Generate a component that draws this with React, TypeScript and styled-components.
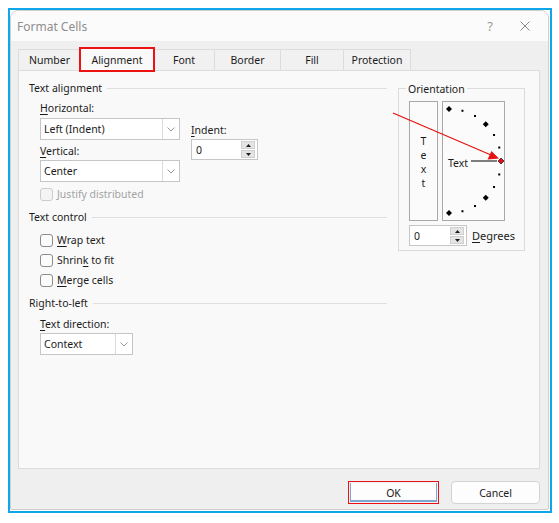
import React from "react";
import styled, { createGlobalStyle } from "styled-components";

const GlobalStyle = createGlobalStyle`
  html, body {
    margin: 0;
    padding: 0;
    background: #ffffff;
  }
  body {
    font-family: "Noto Sans", "Open Sans", "DejaVu Sans", sans-serif;
    font-size: 10.5px;
    color: #1b1b1b;
  }
`;

const Frame = styled("div")`
  margin: 8px 0 0 8px;
  width: 544px;
  height: 505px;
  box-sizing: border-box;
  border: 2px solid #10a7ea;
  background: #ffffff;
`;

const Dialog = styled("div")`
  width: 539px;
  height: 500px;
  box-sizing: border-box;
  border: 1px solid #cfcfcf;
  border-radius: 8px 8px 2px 2px;
  overflow: hidden;
  display: flex;
  flex-direction: column;
  background: #efefef;
`;

const TitleBar = styled("div")`
  height: 30px;
  flex: none;
  display: flex;
  align-items: center;
  padding-left: 6px;
  background: #fbfbfb;
`;

const Title = styled("div")`
  font-size: 12px;
  color: #8e8e8e;
  flex: 1;
`;

const TitleButton = styled("div")<{ $w: number }>`
  width: ${p => p.$w}px;
  height: 30px;
  display: flex;
  align-items: center;
  justify-content: center;
  color: #9a9a9a;
  font-size: 13px;
`;

const Body = styled("div")`
  flex: 1;
  padding: 8px 8px 0 7px;
  display: flex;
  flex-direction: column;
`;

const TabRow = styled("div")`
  display: flex;
  height: 21px;
  align-items: flex-end;
`;

const Tab = styled("div")<{ $w: number; $active?: boolean }>`
  width: ${p => p.$w}px;
  height: ${p => (p.$active ? 23 : 21)}px;
  box-sizing: border-box;
  display: flex;
  align-items: center;
  justify-content: center;
  background: ${p => (p.$active ? "#f9f9f9" : "#f1f1f1")};
  border: 1px solid #dcdcdc;
  border-bottom: none;
  margin-right: -1px;
  margin-bottom: ${p => (p.$active ? "-1px" : "0")};
  position: relative;
  z-index: ${p => (p.$active ? 2 : 1)};
  color: #1b1b1b;
  outline: ${p => (p.$active ? "2px solid #ee1111" : "none")};
  outline-offset: -1px;
`;

const Panel = styled("div")`
  position: relative;
  height: 399px;
  box-sizing: border-box;
  border: 1px solid #dcdcdc;
  background: #f9f9f9;
  padding: 10px 10px;
  display: flex;
  align-items: flex-start;
`;

const LeftColumn = styled("div")`
  width: 358px;
  display: flex;
  flex-direction: column;
`;

const GroupHeader = styled("div")<{ $top?: number }>`
  display: flex;
  align-items: center;
  height: 14px;
  margin-top: ${p => p.$top || 0}px;
  &::after {
    content: "";
    flex: 1;
    height: 1px;
    margin-left: 5px;
    background: #dfdfdf;
  }
`;

const Indented = styled("div")<{ $top?: number }>`
  padding-left: 11px;
  margin-top: ${p => p.$top || 0}px;
  display: flex;
  flex-direction: column;
`;

const AlignRow = styled("div")`
  display: flex;
  align-items: flex-start;
`;

const Stack = styled("div")<{ $top?: number; $left?: number }>`
  display: flex;
  flex-direction: column;
  padding-top: ${p => p.$top || 0}px;
  margin-left: ${p => p.$left || 0}px;
`;

const FieldLabel = styled("div")<{ $top?: number; $bottom?: number }>`
  height: 14px;
  line-height: 14px;
  margin-top: ${p => p.$top || 0}px;
  margin-bottom: ${p => p.$bottom || 0}px;
  u {
    text-decoration-thickness: 1px;
    text-underline-offset: 2px;
  }
`;

const SelectBox = styled("div")<{ $w: number }>`
  width: ${p => p.$w}px;
  height: 22px;
  box-sizing: border-box;
  border: 1px solid #c6c6c6;
  background: #ffffff;
  display: flex;
  align-items: center;
`;

const SelectValue = styled("div")`
  flex: 1;
  padding-left: 3px;
`;

const SelectArrow = styled("div")`
  width: 16px;
  height: 100%;
  border-left: 1px solid #dadada;
  display: flex;
  align-items: center;
  justify-content: center;
`;

const Spinner = styled("div")<{ $w: number }>`
  width: ${p => p.$w}px;
  height: 21px;
  box-sizing: border-box;
  border: 1px solid #c6c6c6;
  background: #ffffff;
  display: flex;
  align-items: center;
`;

const SpinValue = styled("div")`
  flex: 1;
  padding-left: 4px;
`;

const SpinButtons = styled("div")`
  width: 14px;
  height: 17px;
  margin-right: 2px;
  display: flex;
  flex-direction: column;
  gap: 1px;
`;

const SpinButton = styled("div")`
  flex: 1;
  background: #e4e4e4;
  border: 1px solid #cfcfcf;
  box-sizing: border-box;
  display: flex;
  align-items: center;
  justify-content: center;
`;

const CheckRow = styled("div")<{ $top?: number; $disabled?: boolean }>`
  display: flex;
  align-items: center;
  height: 14px;
  margin-top: ${p => p.$top || 0}px;
  color: ${p => (p.$disabled ? "#a3a3a3" : "#1b1b1b")};
  u {
    text-decoration-thickness: 1px;
    text-underline-offset: 2px;
  }
`;

const CheckBox = styled("div")<{ $disabled?: boolean }>`
  width: 13px;
  height: 13px;
  box-sizing: border-box;
  border: 1px solid ${p => (p.$disabled ? "#cdcdcd" : "#8c8c8c")};
  border-radius: 3px;
  background: ${p => (p.$disabled ? "#f4f4f4" : "#fbfbfb")};
  margin-right: 4px;
`;

const OrientBox = styled("div")`
  margin-left: 11px;
  margin-top: 7px;
  width: 127px;
  box-sizing: border-box;
  border: 1px solid #dcdcdc;
  padding: 0 9px 4px 10px;
  display: flex;
  flex-direction: column;
`;

const Legend = styled("div")`
  align-self: flex-start;
  margin: -7px 0 0 -3px;
  padding: 0 2px;
  height: 14px;
  line-height: 14px;
  background: #f9f9f9;
`;

const DialRow = styled("div")`
  display: flex;
  gap: 4px;
  margin-top: 5px;
`;

const VerticalText = styled("div")`
  width: 29px;
  height: 120px;
  box-sizing: border-box;
  border: 1px solid #a8a8a8;
  background: #fbfbfb;
  display: flex;
  flex-direction: column;
  align-items: center;
  justify-content: center;
  padding-top: 4px;
  line-height: 13.8px;
`;

const DialBox = styled("div")`
  width: 63px;
  height: 120px;
  box-sizing: border-box;
  border: 1px solid #a8a8a8;
  background: #fbfbfb;
  position: relative;
`;

const DialLabel = styled("div")`
  position: absolute;
  left: 5px;
  top: 54px;
  line-height: 14px;
`;

const DegreesRow = styled("div")`
  display: flex;
  align-items: center;
  margin-top: 4px;
  u {
    text-decoration-thickness: 1px;
    text-underline-offset: 2px;
  }
`;

const DegreesLabel = styled("div")`
  margin-left: 5px;
  font-size: 11px;
`;

const Annotation = styled("svg")`
  position: absolute;
  left: 0;
  top: 0;
  pointer-events: none;
`;

const ButtonRow = styled("div")`
  display: flex;
  justify-content: flex-end;
  gap: 12px;
  margin-top: 12px;
`;

const DialogButton = styled("div")<{ $w: number; $primary?: boolean }>`
  width: ${p => p.$w}px;
  height: 23px;
  box-sizing: border-box;
  border-radius: ${p => (p.$primary ? "0" : "4px")};
  border: 1px solid ${p => (p.$primary ? "#ee1111" : "#d3d3d3")};
  box-shadow: ${p => (p.$primary ? "inset 0 0 0 1px #eef3f8, inset 0 -1px 0 2px #7fa6cf" : "none")};
  background: #fdfdfd;
  display: flex;
  align-items: center;
  justify-content: center;
`;

const Chevron = () => (
  <svg width="8" height="5" viewBox="0 0 8 5">
    <polyline points="0.5,0.5 4,4 7.5,0.5" fill="none" stroke="#9a9a9a" strokeWidth="1" />
  </svg>
);

const Triangle = ({ up }: { up?: boolean }) => (
  <svg width="5" height="3" viewBox="0 0 5 3">
    <polygon points={up ? "0,3 2.5,0 5,3" : "0,0 5,0 2.5,3"} fill="#1b1b1b" />
  </svg>
);

const Select = ({ value, width }: { value: string; width: number }) => (
  <SelectBox $w={width}>
    <SelectValue>{value}</SelectValue>
    <SelectArrow>
      <Chevron />
    </SelectArrow>
  </SelectBox>
);

const Spin = ({ value, width }: { value: string; width: number }) => (
  <Spinner $w={width}>
    <SpinValue>{value}</SpinValue>
    <SpinButtons>
      <SpinButton>
        <Triangle up />
      </SpinButton>
      <SpinButton>
        <Triangle />
      </SpinButton>
    </SpinButtons>
  </Spinner>
);

const Check = ({ children, top, disabled }: { children: React.ReactNode; top?: number; disabled?: boolean }) => (
  <CheckRow $top={top} $disabled={disabled}>
    <CheckBox $disabled={disabled} />
    <span>{children}</span>
  </CheckRow>
);

// dial marks: centre at (7,60), radius 52, every 15 degrees
const DialMarks = () => {
  const marks = [];
  for (let a = -90; a <= 90; a += 15) {
    const r = (a * Math.PI) / 180;
    const x = 6 + 52 * Math.cos(r);
    const y = 59 - 52 * Math.sin(r);
    if (a % 45 === 0) {
      const color = a === 0 ? "#d11" : "#000";
      marks.push(
        <polygon
          key={a}
          points={`${x},${y - 3} ${x + 3},${y} ${x},${y + 3} ${x - 3},${y}`}
          fill={color}
          stroke={a === 0 ? "#000" : "none"}
          strokeWidth="0.6"
        />
      );
    } else {
      marks.push(<rect key={a} x={x - 1} y={y - 1} width="2" height="2" fill="#000" />);
    }
  }
  return (
    <svg width="61" height="118" viewBox="0 0 61 118" style={{ position: "absolute", left: 0, top: 0 }}>
      {marks}
      <line x1="28" y1="59" x2="54" y2="59" stroke="#000" strokeWidth="1" />
    </svg>
  );
};

const tabs = [
  { name: "Number", w: 63 },
  { name: "Alignment", w: 74 },
  { name: "Font", w: 62 },
  { name: "Border", w: 67 },
  { name: "Fill", w: 64 },
  { name: "Protection", w: 68 },
];

const App: React.FC = () => {
  return (
    <React.Fragment>
      <GlobalStyle />
      <Frame>
        <Dialog>
          <TitleBar>
            <Title>Format Cells</Title>
            <TitleButton $w={24}>?</TitleButton>
            <TitleButton $w={46}>
              <svg width="10" height="10" viewBox="0 0 10 10">
                <path d="M0.5 0.5 L9.5 9.5 M9.5 0.5 L0.5 9.5" stroke="#8a8a8a" strokeWidth="1" />
              </svg>
            </TitleButton>
          </TitleBar>
          <Body>
            <TabRow>
              {tabs.map(t => (
                <Tab key={t.name} $w={t.w} $active={t.name === "Alignment"}>
                  {t.name}
                </Tab>
              ))}
            </TabRow>
            <Panel>
              <LeftColumn>
                <GroupHeader>Text alignment</GroupHeader>
                <Indented $top={6}>
                  <AlignRow>
                    <Stack>
                      <FieldLabel $bottom={3}>
                        <u>H</u>orizontal:
                      </FieldLabel>
                      <Select value="Left (Indent)" width={140} />
                      <FieldLabel $top={4} $bottom={2}>
                        <u>V</u>ertical:
                      </FieldLabel>
                      <Select value="Center" width={140} />
                    </Stack>
                    <Stack $top={22} $left={11}>
                      <FieldLabel $bottom={2}>
                        <u>I</u>ndent:
                      </FieldLabel>
                      <Spin value="0" width={67} />
                    </Stack>
                  </AlignRow>
                  <Check top={5} disabled>
                    Justify distributed
                  </Check>
                </Indented>
                <GroupHeader $top={9}>Text control</GroupHeader>
                <Indented $top={9}>
                  <Check>
                    <u>W</u>rap text
                  </Check>
                  <Check top={6}>
                    Shrin<u>k</u> to fit
                  </Check>
                  <Check top={6}>
                    <u>M</u>erge cells
                  </Check>
                </Indented>
                <GroupHeader $top={9}>Right-to-left</GroupHeader>
                <Indented $top={7}>
                  <FieldLabel $bottom={2}>
                    <u>T</u>ext direction:
                  </FieldLabel>
                  <Select value="Context" width={93} />
                </Indented>
              </LeftColumn>
              <OrientBox>
                <Legend>Orientation</Legend>
                <DialRow>
                  <VerticalText>
                    <span>T</span>
                    <span>e</span>
                    <span>x</span>
                    <span>t</span>
                  </VerticalText>
                  <DialBox>
                    <DialMarks />
                    <DialLabel>Text</DialLabel>
                  </DialBox>
                </DialRow>
                <DegreesRow>
                  <Spin value="0" width={67} />
                  <DegreesLabel>
                    <u>D</u>egrees
                  </DegreesLabel>
                </DegreesRow>
              </OrientBox>
              <Annotation width="520" height="397" viewBox="0 0 520 397">
                <line x1="374" y1="42" x2="472" y2="84" stroke="#e81010" strokeWidth="1.2" />
                <polygon points="480,87.5 468.6,88.6 472.4,79.9" fill="#e81010" />
              </Annotation>
            </Panel>
            <ButtonRow>
              <DialogButton $w={91} $primary>
                OK
              </DialogButton>
              <DialogButton $w={89}>Cancel</DialogButton>
            </ButtonRow>
          </Body>
        </Dialog>
      </Frame>
    </React.Fragment>
  );
};

export default App;
